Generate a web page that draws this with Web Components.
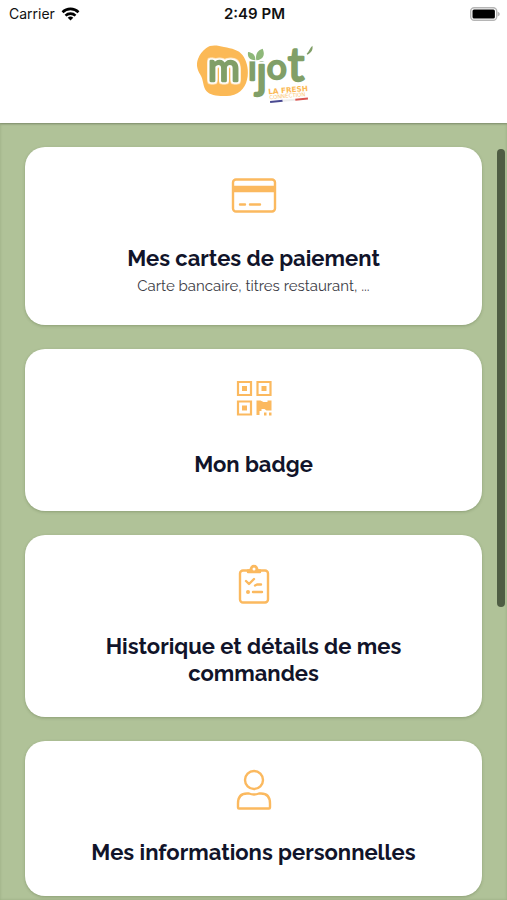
<!DOCTYPE html>
<html lang="fr">
<head>
  <meta charset="utf-8">
  <meta name="viewport" content="width=device-width, initial-scale=1">
  <title>Mijot'</title>
  <style>
    html, body {
      height: 100%;
      margin: 0;
    }

    body {
      color: #11142a;
      font-family: Raleway, Lato, "Open Sans", sans-serif;
      overflow: hidden;
    }
  </style>
</head>
<body>
  <mijot-app>
    <status-bar slot="top" carrier="Carrier" time="2:49 PM"></status-bar>
    <mijot-logo slot="top"></mijot-logo>

    <menu-card icon="card" href="#cartes">
      Mes cartes de paiement
      <span slot="note">Carte bancaire, titres restaurant, ...</span>
    </menu-card>
    <menu-card icon="qr" href="#badge" roomy>Mon badge</menu-card>
    <menu-card icon="list" href="#historique">Historique et détails de mes commandes</menu-card>
    <menu-card icon="user" href="#informations">Mes informations personnelles</menu-card>
  </mijot-app>

  <script>
    class MijotApp extends HTMLElement {
      constructor() {
        super();
        this.attachShadow({ mode: 'open' });
        this.shadowRoot.innerHTML = `
          <style>
            :host {
              display: flex;
              flex-direction: column;
              height: 100%;
            }

            header {
              flex: none;
              background: #fff;
              padding-bottom: 19px;
              box-shadow: 0 1px 2px rgba(0, 0, 0, .25);
              z-index: 1;
            }

            main {
              position: relative;
              flex: 1;
              min-height: 0;
              overflow: hidden;
              background: #b0c298;
              box-shadow: inset 0 0 3px rgba(60, 80, 40, .2);
            }

            .list {
              display: flex;
              flex-direction: column;
              gap: 24px;
              padding: 24px 25px;
            }

            /* Scroll indicator, floats over the list */
            .thumb {
              position: absolute;
              top: 26px;
              right: 2px;
              width: 8px;
              height: 59%;
              border-radius: 4px;
              background: #4f5d43;
            }
          </style>
          <header><slot name="top"></slot></header>
          <main>
            <div class="list"><slot></slot></div>
            <div class="thumb"></div>
          </main>
        `;
      }
    }

    class StatusBar extends HTMLElement {
      constructor() {
        super();
        this.attachShadow({ mode: 'open' });
      }

      connectedCallback() {
        this.shadowRoot.innerHTML = `
          <style>
            :host {
              display: grid;
              grid-template-columns: 1fr auto 1fr;
              align-items: center;
              height: 28px;
              padding: 0 7px 0 9px;
              color: #111;
              font: 14px/20px Inter, "Liberation Sans", sans-serif;
            }

            .carrier {
              display: flex;
              align-items: center;
              gap: 6px;
            }

            .time {
              font-size: 15px;
              font-weight: 600;
            }

            .battery {
              justify-self: end;
            }

            svg {
              display: block;
            }
          </style>
          <div class="carrier">
            <span>${this.getAttribute('carrier')}</span>
            <svg width="19" height="14" viewBox="0 0 18 14" fill="none" stroke="#000" stroke-width="2.6">
              <path d="M1 5.2a11.4 11.4 0 0 1 16 0"/>
              <path d="M4 8.6a7.2 7.2 0 0 1 10 0"/>
              <path d="M9 13.6L6.2 10.8a4 4 0 0 1 5.6 0z" fill="#000" stroke="none"/>
            </svg>
          </div>
          <span class="time">${this.getAttribute('time')}</span>
          <svg class="battery" width="30" height="14" viewBox="0 0 30 14">
            <rect x=".7" y=".7" width="26" height="12.6" rx="3.5" fill="#fff" stroke="#b5b5b5" stroke-width="1.4"/>
            <rect x="2.5" y="2.5" width="22.4" height="9" rx="1.5" fill="#000"/>
            <path d="M27.6 4.5q2.3 1 2.3 2.5t-2.3 2.5z" fill="#b5b5b5"/>
          </svg>
        `;
      }
    }

    class MijotLogo extends HTMLElement {
      constructor() {
        super();
        this.attachShadow({ mode: 'open' });
        this.shadowRoot.innerHTML = `
          <style>
            :host {
              display: flex;
              justify-content: center;
              padding-top: 16px;
            }

            svg {
              display: block;
              overflow: visible;
            }

            .name {
              font-family: Lato, sans-serif;
              font-weight: 400;
              fill: #819f68;
              stroke: #819f68;
              stroke-width: 7px;
              stroke-linejoin: round;
            }

            /* White outline around the letter on the orange blob */
            .outlined {
              filter: drop-shadow(5px 0 0 #fff) drop-shadow(-5px 0 0 #fff) drop-shadow(0 5px 0 #fff) drop-shadow(0 -5px 0 #fff);
            }

            .tagline {
              font-family: "DejaVu Sans", sans-serif;
            }
          </style>
          <svg width="120" height="60" viewBox="42 42 360 180" role="img" aria-label="Mijot' La Fresh Connection">
            <path d="M78 55C92 43 112 46 132 51C156 56 176 59 188 76C199 92 206 113 203 139C200 166 184 193 151 197C126 200 92 199 79 183C68 168 71 150 61 134C51 118 48 103 54 87C59 74 67 64 78 55Z" fill="#fbb956"/>
            <text class="name outlined" x="84" y="153" font-size="116">m</text>
            <text class="name"><tspan x="204" y="149" font-size="108">i</tspan><tspan x="229" y="174" font-size="134">j</tspan><tspan x="260" y="147" font-size="106">o</tspan><tspan x="323" y="152" font-size="138">t</tspan></text>
            <path d="M206 50h52v44h-52z" fill="#fff"/>
            <path d="M226 91C207 90 202 80 204 66C219 68 227 76 226 91Z" fill="#8eb879"/>
            <path d="M229 91C225 73 233 60 248 56C256 75 250 88 229 91Z" fill="#8eb879"/>
            <path d="M380 71C388 64 390 52 397 47C400 58 394 68 382 74Z" fill="#819f68"/>
            <g class="tagline" transform="rotate(-5 265 190)">
              <text x="265" y="193" font-size="22" font-weight="700" fill="#fbb956">LA FRESH</text>
              <text x="267" y="208" font-size="16" fill="#fbc878">CONNECTION</text>
              <path d="M268 213h38v6h-38z" fill="#4a4a91"/>
              <path d="M306 213h38v6h-38z" fill="#eee"/>
              <path d="M344 213h38v6h-38z" fill="#d9534f"/>
            </g>
          </svg>
        `;
      }
    }

    const icons = {
      card: `
        <svg width="46" height="42" viewBox="0 0 46 42" fill="none" stroke="currentColor" stroke-width="2.4">
          <rect x="2" y="4.5" width="42" height="32" rx="3"/>
          <path d="M2 14h42" stroke-width="6.4"/>
          <path d="M9 29.5h5M19 29.5h10" stroke-linecap="round"/>
        </svg>`,
      qr: `
        <svg width="36" height="42" viewBox="0 0 36 42" fill="none" stroke="currentColor" stroke-width="2.2">
          <path d="M2 3h13v13H2zM21.5 3h13v13h-13zM2 22.5h13v13H2z"/>
          <path d="M6 7h5v5H6zM25.5 7h5v5h-5zM6 26.5h5v5H6z" fill="currentColor" stroke="none"/>
          <path d="M20.5 21.5h4l3 1.5h4v-1.5h4v10h-5l-2-1.5h-3v2h-2v4h-3zM28 33.5h2.5v3H28zM33 33.5h2.5v3H33z" fill="currentColor" stroke="none"/>
        </svg>`,
      list: `
        <svg width="32" height="42" viewBox="0 0 32 42" fill="none" stroke="currentColor" stroke-width="2.4" stroke-linecap="round" stroke-linejoin="round">
          <rect x="2" y="7.5" width="28" height="32" rx="3"/>
          <path d="M10 9V7.5h2.5q.5-4.5 3.5-4.5t3.5 4.5H22V9z" fill="currentColor"/>
          <circle cx="16" cy="6" r="1.5" fill="#fff" stroke="none"/>
          <path d="M8 18l3 3 5-5M17 22.5l2-1h4M15 29h9"/>
          <circle cx="10" cy="29" r="2" fill="currentColor" stroke="none"/>
        </svg>`,
      user: `
        <svg width="36" height="42" viewBox="0 0 36 42" fill="none" stroke="currentColor" stroke-width="2.4" stroke-linejoin="round">
          <circle cx="18" cy="11" r="9"/>
          <path d="M2 38.5v-4Q2 24.5 11 24.5h2q5 2 10 0h2q9 0 9 10v4q0 1-1 1H3q-1 0-1-1z"/>
        </svg>`
    };

    class MenuCard extends HTMLElement {
      constructor() {
        super();
        this.attachShadow({ mode: 'open' });
      }

      connectedCallback() {
        this.shadowRoot.innerHTML = `
          <style>
            :host {
              display: block;
            }

            a {
              display: flex;
              flex-direction: column;
              align-items: center;
              padding: 28px 48px 30px;
              border-radius: 20px;
              background: #fff;
              box-shadow: 0 1px 3px rgba(60, 80, 40, .3);
              color: inherit;
              text-align: center;
              text-decoration: none;
            }

            :host([roomy]) a {
              padding-top: 30px;
              padding-bottom: 33px;
            }

            .icon {
              height: 42px;
              margin-bottom: 28px;
              color: #fbb95f;
            }

            :host([roomy]) .icon {
              margin-bottom: 30px;
            }

            .title {
              font-size: 22px;
              font-weight: 700;
              line-height: 27px;
            }

            ::slotted([slot="note"]) {
              margin-top: 5px;
              color: #3c3c46;
              font-size: 15px;
              line-height: 18px;
            }
          </style>
          <a href="${this.getAttribute('href')}">
            <span class="icon">${icons[this.getAttribute('icon')]}</span>
            <span class="title"><slot></slot></span>
            <slot name="note"></slot>
          </a>
        `;
      }
    }

    customElements.define('mijot-app', MijotApp);
    customElements.define('status-bar', StatusBar);
    customElements.define('mijot-logo', MijotLogo);
    customElements.define('menu-card', MenuCard);
  </script>
</body>
</html>
